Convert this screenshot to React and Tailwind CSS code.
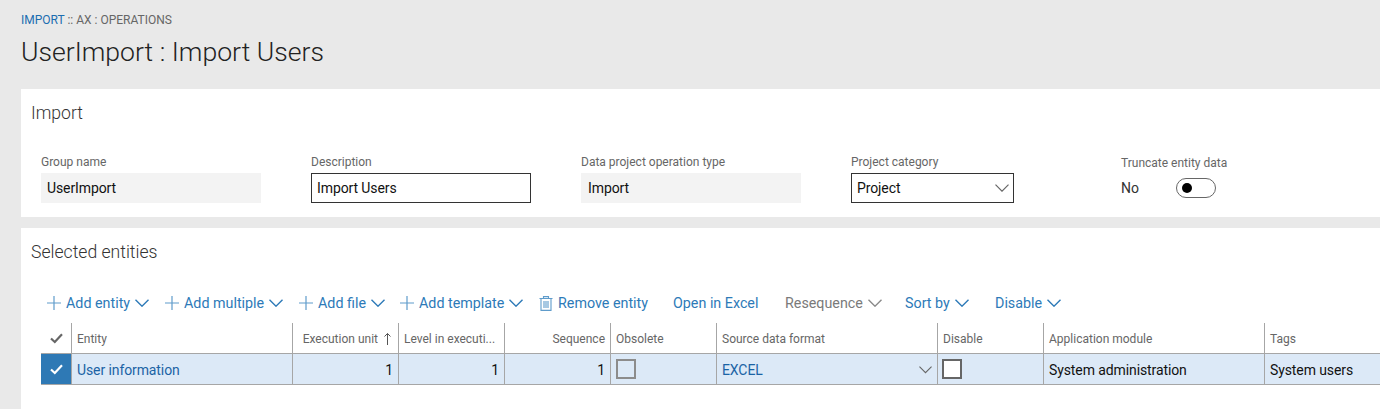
import React from "react";

const Chevron = ({ className = "text-[#2d7ab8]", size = 14, weight = 1.4 }) => (
  <svg width={size} height={size * 0.6} viewBox="0 0 14 8" fill="none" stroke="currentColor" strokeWidth={weight} className={className}>
    <path d="M0.5 0.5 L7 7 L13.5 0.5" />
  </svg>
);

const Plus = () => (
  <svg width="14" height="14" viewBox="0 0 14 14" stroke="#5f9ccb" strokeWidth="1.2" className="mr-[5px] shrink-0">
    <path d="M7 0 V14 M0 7 H14" />
  </svg>
);

const Trash = () => (
  <svg width="14" height="15" viewBox="0 0 14 15" fill="none" stroke="#5f9ccb" strokeWidth="1.1" className="mr-[5px] shrink-0">
    <path d="M0.5 2.5 H13.5 M4.5 2.5 V0.6 H9.5 V2.5 M2 2.5 V14.4 H12 V2.5 M5 5 V12 M7 5 V12 M9 5 V12" />
  </svg>
);

const Check = ({ color }) => (
  <svg width="13" height="11" viewBox="0 0 13 11" fill="none" stroke={color} strokeWidth="2.2">
    <path d="M1 5.5 L4.8 9 L12 1.2" />
  </svg>
);

const Field = ({ label, children, className }) => (
  <div className={className}>
    <div className="text-[12px] leading-[16px] tracking-normal text-[#666]">{label}</div>
    {children}
  </div>
);

const ToolItem = ({ width, icon, text, chevron, muted }) => (
  <div className={`flex items-center shrink-0 ${width}`}>
    {icon}
    <span className={`whitespace-nowrap pt-[1px] ${muted ? "text-[#7a7a7a]" : "text-[#2d7ab8]"}`}>{text}</span>
    {chevron && (
      <span className="ml-[5px]">
        <Chevron className={muted ? "text-[#8a8a8a]" : "text-[#2d7ab8]"} />
      </span>
    )}
  </div>
);

const columns = [
  { name: "Entity", w: "w-[221px]" },
  { name: "Execution unit", w: "w-[106px]", right: true, sort: true },
  { name: "Level in executi...", w: "w-[106px]" },
  { name: "Sequence", w: "w-[106px]", right: true },
  { name: "Obsolete", w: "w-[106px]" },
  { name: "Source data format", w: "w-[221px]" },
  { name: "Disable", w: "w-[106px]" },
  { name: "Application module", w: "w-[221px]" },
  { name: "Tags", w: "w-[116px]" },
];

const cell = "h-full shrink-0 border-l border-[#a6a6a6] px-[5px] flex items-center";

export default function App() {
  return (
    <div className="w-[1380px] h-[409px] overflow-hidden bg-[#e9e9e9] font-['Roboto',sans-serif] text-[#111]">
      {/* Page header */}
      <div className="h-[89px] pl-[21px] pt-[12px]">
        <div className="text-[12px] leading-[16px] text-[#666]">
          <span className="text-[#1b6db0]">IMPORT</span> :: AX : OPERATIONS
        </div>
        <h1 className="mt-[5px] text-[26.6px] leading-[38px] font-light text-[#222]">UserImport : Import Users</h1>
      </div>

      {/* Import card */}
      <div className="ml-[21px] h-[128px] bg-white">
        <div className="pl-[10px] pt-[12px] text-[17.6px] leading-[24px] font-light text-[#333]">Import</div>
        <div className="flex pl-[20px] mt-[29px] text-[14px] tracking-[-0.1px]">
          <Field label="Group name" className="w-[270px]">
            <div className="mt-[3px] w-[220px] h-[30px] bg-[#f3f3f3] px-[6px] flex items-center">UserImport</div>
          </Field>
          <Field label="Description" className="w-[270px]">
            <div className="mt-[3px] w-[220px] h-[30px] border border-[#333] px-[5px] flex items-center">Import Users</div>
          </Field>
          <Field label="Data project operation type" className="w-[270px]">
            <div className="mt-[3px] w-[220px] h-[30px] bg-[#f3f3f3] px-[7px] flex items-center">Import</div>
          </Field>
          <Field label="Project category" className="w-[270px]">
            <div className="mt-[3px] w-[163px] h-[30px] border border-[#333] pl-[5px] pr-[4px] flex items-center justify-between">
              Project
              <Chevron className="text-[#666]" weight={1.2} />
            </div>
          </Field>
          <Field label="Truncate entity data" className="w-[130px] pt-[1px]">
            <div className="mt-[2px] h-[30px] flex items-center text-[#333]">
              <span className="w-[55px]">No</span>
              <div className="w-[40px] h-[20px] rounded-full border border-[#666] pl-[5px] flex items-center">
                <div className="w-[10px] h-[10px] rounded-full bg-black" />
              </div>
            </div>
          </Field>
        </div>
      </div>

      {/* Selected entities card */}
      <div className="ml-[21px] mt-[11px] h-[181px] bg-white">
        <div className="pl-[10px] pt-[12px] text-[17.6px] leading-[24px] font-light text-[#333]">Selected entities</div>
        <div className="flex items-center h-[30px] mt-[24px] pl-[26px] text-[14.3px]">
          <ToolItem width="w-[118px]" icon={<Plus />} text="Add entity" chevron />
          <ToolItem width="w-[134px]" icon={<Plus />} text="Add multiple" chevron />
          <ToolItem width="w-[101px]" icon={<Plus />} text="Add file" chevron />
          <ToolItem width="w-[139px]" icon={<Plus />} text="Add template" chevron />
          <ToolItem width="w-[134px]" icon={<Trash />} text="Remove entity" />
          <ToolItem width="w-[112px]" text="Open in Excel" />
          <ToolItem width="w-[120px]" text="Resequence" chevron muted />
          <ToolItem width="w-[90px]" text="Sort by" chevron />
          <ToolItem width="w-[70px]" text="Disable" chevron />
        </div>

        {/* Grid */}
        <div className="ml-[20px] mt-[5px]">
          <div className="flex h-[30px] text-[12px] text-[#666]">
            <div className="w-[30px] shrink-0 flex items-center justify-center">
              <Check color="#666" />
            </div>
            {columns.map((c) => (
              <div key={c.name} className={`${cell} pt-[1px] ${c.w} ${c.right ? "justify-end" : ""}`}>
                <span className="whitespace-nowrap">{c.name}</span>
                {c.sort && (
                  <svg width="7" height="12" viewBox="0 0 7 12" fill="none" stroke="#555" className="ml-[6px] mr-[2px]">
                    <path d="M0.5 3.5 L3.5 0.5 L6.5 3.5 M3.5 0.5 V12" />
                  </svg>
                )}
              </div>
            ))}
          </div>
          <div className="flex h-[32px] border-y border-[#a6a6a6] bg-[#dce9f7] text-[14px] tracking-[-0.1px]">
            <div className="w-[30px] shrink-0 bg-[#2e79b5] flex items-center justify-center">
              <Check color="#fff" />
            </div>
            <div className={`${cell} pt-[2px] w-[221px] text-[#1b63a5]`}>User information</div>
            <div className={`${cell} pt-[2px] w-[106px] justify-end`}>1</div>
            <div className={`${cell} pt-[2px] w-[106px] justify-end`}>1</div>
            <div className={`${cell} pt-[2px] w-[106px] justify-end`}>1</div>
            <div className={`${cell} w-[106px]`}>
              <div className="w-[20px] h-[20px] border-2 border-[#8c8c8c]" />
            </div>
            <div className={`${cell} pt-[2px] w-[221px] justify-between text-[#1b63a5]`}>
              EXCEL
              <span>
                <Chevron className="text-[#666]" size={13} weight={1.2} />
              </span>
            </div>
            <div className={`${cell} pl-[4px] w-[106px]`}>
              <div className="w-[20px] h-[20px] border-2 border-[#666] bg-white" />
            </div>
            <div className={`${cell} pt-[2px] w-[221px]`}>System administration</div>
            <div className={`${cell} pt-[2px] w-[116px]`}>System users</div>
          </div>
        </div>
      </div>
    </div>
  );
}
